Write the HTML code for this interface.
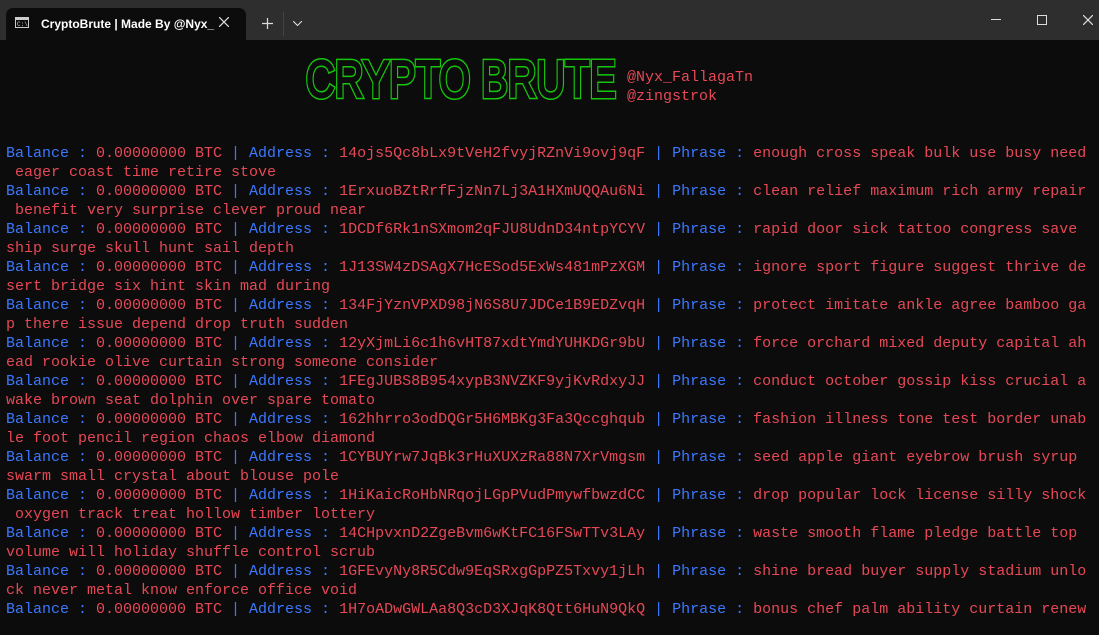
<!DOCTYPE html>
<html><head><meta charset="utf-8"><style>
body{margin:0;width:1099px;height:635px;background:#0c0c0c;overflow:hidden;position:relative;font-family:"Liberation Mono",monospace}
.tb{position:absolute;left:0;top:0;width:1099px;height:40px;background:#2e2e2e}
.tab{position:absolute;left:6px;top:8px;width:240px;height:32px;background:#0c0c0c;border-radius:7px 7px 0 0}
.tt{position:absolute;left:41px;top:17px;color:#fff;font:bold 12px "Liberation Sans",sans-serif}
.term{position:absolute;left:6px;top:144px;width:1093px;font-size:15px;line-height:19px;white-space:pre}
.b{color:#3b78ff}.r{color:#e74856}
.h{position:absolute;left:627px;font-size:15px;line-height:19px;color:#e74856}
</style></head><body>
<div class="tb">
<div class="tab"></div>
<svg style="position:absolute;left:15px;top:17px" width="14" height="11"><rect x="0.5" y="0.5" width="13" height="10" fill="none" stroke="#ccc"/><rect x="1" y="1" width="12" height="2" fill="#ccc"/><text x="2" y="9" font-size="6" fill="#ccc" font-family="Liberation Mono">C:\</text></svg>
<div class="tt">CryptoBrute | Made By @Nyx_</div>
<svg style="position:absolute;left:219px;top:17px" width="10" height="10"><path d="M0 0L10 10M10 0L0 10" stroke="#ddd" stroke-width="1.2"/></svg>
<svg style="position:absolute;left:262px;top:18px" width="11" height="11"><path d="M5.5 0V11M0 5.5H11" stroke="#ddd" stroke-width="1.2"/></svg>
<div style="position:absolute;left:283px;top:12px;width:1px;height:24px;background:#444"></div>
<svg style="position:absolute;left:293px;top:21px" width="9" height="5"><path d="M0 0L4.5 4.5L9 0" stroke="#ddd" fill="none" stroke-width="1.1"/></svg>
<div style="position:absolute;left:991px;top:19px;width:10px;height:1px;background:#ddd"></div>
<div style="position:absolute;left:1037px;top:15px;width:8px;height:8px;border:1px solid #ddd"></div>
<svg style="position:absolute;left:1083px;top:15px" width="10" height="10"><path d="M0 0L10 10M10 0L0 10" stroke="#ddd" stroke-width="1.2"/></svg>
</div>
<svg style="position:absolute;left:300px;top:52px" width="325" height="50" font-size="52" font-family="Liberation Sans Narrow,Liberation Sans,sans-serif">
<text x="6" y="45" textLength="310" lengthAdjust="spacingAndGlyphs" fill="none" stroke="#16c60c" stroke-width="5">CRYPTO BRUTE</text>
<text x="6" y="45" textLength="310" lengthAdjust="spacingAndGlyphs" fill="#0c0c0c" stroke="#0c0c0c" stroke-width="2">CRYPTO BRUTE</text>
</svg>
<div class="h" style="top:68px">@Nyx_FallagaTn</div>
<div class="h" style="top:87px">@zingstrok</div>
<div class="term"><span class="b">Balance : </span><span class="r">0.00000000 BTC </span><span class="b">| Address : </span><span class="r">14ojs5Qc8bLx9tVeH2fvyjRZnVi9ovj9qF </span><span class="b">| Phrase : </span><span class="r">enough cross speak bulk use busy need
 eager coast time retire stove</span>
<span class="b">Balance : </span><span class="r">0.00000000 BTC </span><span class="b">| Address : </span><span class="r">1ErxuoBZtRrfFjzNn7Lj3A1HXmUQQAu6Ni </span><span class="b">| Phrase : </span><span class="r">clean relief maximum rich army repair
 benefit very surprise clever proud near</span>
<span class="b">Balance : </span><span class="r">0.00000000 BTC </span><span class="b">| Address : </span><span class="r">1DCDf6Rk1nSXmom2qFJU8UdnD34ntpYCYV </span><span class="b">| Phrase : </span><span class="r">rapid door sick tattoo congress save
ship surge skull hunt sail depth</span>
<span class="b">Balance : </span><span class="r">0.00000000 BTC </span><span class="b">| Address : </span><span class="r">1J13SW4zDSAgX7HcESod5ExWs481mPzXGM </span><span class="b">| Phrase : </span><span class="r">ignore sport figure suggest thrive de
sert bridge six hint skin mad during</span>
<span class="b">Balance : </span><span class="r">0.00000000 BTC </span><span class="b">| Address : </span><span class="r">134FjYznVPXD98jN6S8U7JDCe1B9EDZvqH </span><span class="b">| Phrase : </span><span class="r">protect imitate ankle agree bamboo ga
p there issue depend drop truth sudden</span>
<span class="b">Balance : </span><span class="r">0.00000000 BTC </span><span class="b">| Address : </span><span class="r">12yXjmLi6c1h6vHT87xdtYmdYUHKDGr9bU </span><span class="b">| Phrase : </span><span class="r">force orchard mixed deputy capital ah
ead rookie olive curtain strong someone consider</span>
<span class="b">Balance : </span><span class="r">0.00000000 BTC </span><span class="b">| Address : </span><span class="r">1FEgJUBS8B954xypB3NVZKF9yjKvRdxyJJ </span><span class="b">| Phrase : </span><span class="r">conduct october gossip kiss crucial a
wake brown seat dolphin over spare tomato</span>
<span class="b">Balance : </span><span class="r">0.00000000 BTC </span><span class="b">| Address : </span><span class="r">162hhrro3odDQGr5H6MBKg3Fa3Qccghqub </span><span class="b">| Phrase : </span><span class="r">fashion illness tone test border unab
le foot pencil region chaos elbow diamond</span>
<span class="b">Balance : </span><span class="r">0.00000000 BTC </span><span class="b">| Address : </span><span class="r">1CYBUYrw7JqBk3rHuXUXzRa88N7XrVmgsm </span><span class="b">| Phrase : </span><span class="r">seed apple giant eyebrow brush syrup
swarm small crystal about blouse pole</span>
<span class="b">Balance : </span><span class="r">0.00000000 BTC </span><span class="b">| Address : </span><span class="r">1HiKaicRoHbNRqojLGpPVudPmywfbwzdCC </span><span class="b">| Phrase : </span><span class="r">drop popular lock license silly shock
 oxygen track treat hollow timber lottery</span>
<span class="b">Balance : </span><span class="r">0.00000000 BTC </span><span class="b">| Address : </span><span class="r">14CHpvxnD2ZgeBvm6wKtFC16FSwTTv3LAy </span><span class="b">| Phrase : </span><span class="r">waste smooth flame pledge battle top
volume will holiday shuffle control scrub</span>
<span class="b">Balance : </span><span class="r">0.00000000 BTC </span><span class="b">| Address : </span><span class="r">1GFEvyNy8R5Cdw9EqSRxgGpPZ5Txvy1jLh </span><span class="b">| Phrase : </span><span class="r">shine bread buyer supply stadium unlo
ck never metal know enforce office void</span>
<span class="b">Balance : </span><span class="r">0.00000000 BTC </span><span class="b">| Address : </span><span class="r">1H7oADwGWLAa8Q3cD3XJqK8Qtt6HuN9QkQ </span><span class="b">| Phrase : </span><span class="r">bonus chef palm ability curtain renew</span></div>
</body></html>
